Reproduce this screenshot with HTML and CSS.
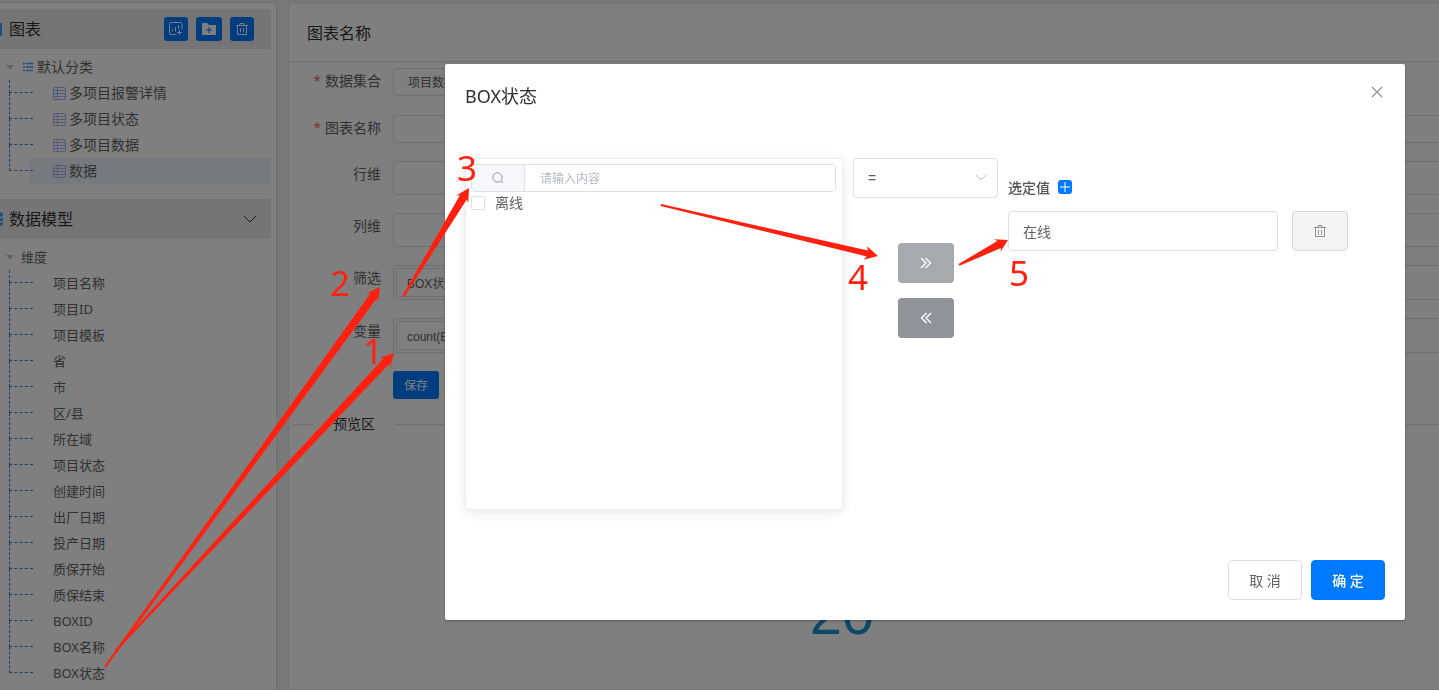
FILE: index.html
```html
<!DOCTYPE html>
<html lang="zh-CN">
<head>
<meta charset="utf-8">
<title>图表</title>
<link rel="stylesheet" href="styles.css">
</head>
<body>
<svg class="defs" aria-hidden="true">
  <symbol id="sheet" viewBox="0 0 13 13"><rect x=".5" y=".5" width="12" height="12" rx="1.5"/><path d="M.5 3.5h12M.5 6.5h12M.5 9.5h12M4.5 .5v12"/></symbol>
  <symbol id="trash" viewBox="0 0 14 14"><path d="M1 3.5h12M5 3V1.5h4V3M2.500 4v8.500h9V4M5.500 6v4.500M8.500 6v4.500"/></symbol>
</svg>
<div class="app">
  <aside class="side">
    <header class="side-head">
      <svg class="head-icon" viewBox="0 0 16 16"><path d="M1 2h14v13H1z"/></svg>
      <h2>图表</h2>
      <div class="tools">
        <button class="tool" aria-label="新增图表"><svg viewBox="0 0 14 14"><path d="M7.500 12.500H2A1.500 1.500 0 0 1 .5 11V2A1.500 1.500 0 0 1 2 .5h9.500A1.500 1.500 0 0 1 13 2v5.500M3.500 9.500v-2M6.500 9.500V5M9.500 7V3M10.500 8v5M8 10.500h5"/></svg></button>
        <button class="tool" aria-label="新增分类"><svg viewBox="0 0 14 14"><path class="solid" d="M0 1h5.500l1.500 2h7v10H0z"/><path class="blue" d="M7 5v6M4 8h6"/></svg></button>
        <button class="tool" aria-label="删除"><svg><use href="#trash"/></svg></button>
      </div>
    </header>
    <div class="tree">
      <div class="root"><span class="caret"></span><svg class="list" viewBox="0 0 10 10"><path d="M0 1.500h2M3 1.500h7M0 5h2M3 5h7M0 8.500h2M3 8.500h7"/></svg>默认分类</div>
      <ul class="nodes charts">
        <li><svg><use href="#sheet"/></svg>多项目报警详情</li>
        <li><svg><use href="#sheet"/></svg>多项目状态</li>
        <li><svg><use href="#sheet"/></svg>多项目数据</li>
        <li class="current"><svg><use href="#sheet"/></svg>数据</li>
      </ul>
    </div>
    <header class="side-head model">
      <svg class="head-icon" viewBox="0 0 16 16"><path d="M0 2q8-3 16 0v3q-8 3-16 0zM0 6.500q8 3 16 0v3q-8 3-16 0zM0 11q8 3 16 0v3q-8 3-16 0z"/></svg>
      <h2>数据模型</h2>
      <svg class="fold" viewBox="0 0 14 8"><path d="M1 1l6 6 6-6"/></svg>
    </header>
    <div class="tree small">
      <div class="root"><span class="caret"></span>维度</div>
      <ul class="nodes">
        <li>项目名称</li><li>项目ID</li><li>项目模板</li><li>省</li><li>市</li><li>区/县</li><li>所在域</li><li>项目状态</li><li>创建时间</li><li>出厂日期</li><li>投产日期</li><li>质保开始</li><li>质保结束</li><li>BOXID</li><li>BOX名称</li><li>BOX状态</li>
      </ul>
    </div>
  </aside>
  <main class="main">
    <h2 class="main-head">图表名称</h2>
    <form class="form">
      <div class="row first"><label class="need" for="ds">数据集合</label><select id="ds" class="ds"><option>项目数据</option></select></div>
      <div class="row"><label class="need" for="nm">图表名称</label><input id="nm" class="field" type="text"></div>
      <div class="row"><span class="label">行维</span><div class="drop"></div></div>
      <div class="row"><span class="label">列维</span><div class="drop"></div></div>
      <div class="row"><span class="label">筛选</span><div class="drop filled"><button type="button" class="tag">BOX状态</button></div></div>
      <div class="row"><span class="label">变量</span><div class="drop filled"><button type="button" class="tag">count(BOX状态)</button></div></div>
      <div class="row"><span class="label"></span><button type="button" class="save">保存</button></div>
    </form>
    <div class="divider">预览区</div>
    <div class="figure">20</div>
  </main>
</div>
<div class="mask">
  <section class="dialog" role="dialog" aria-labelledby="dt">
    <header class="dialog-head">
      <h1 id="dt">BOX状态</h1>
      <button class="close" aria-label="关闭"><svg viewBox="0 0 12 12"><path d="M1 1l10 10M11 1L1 11"/></svg></button>
    </header>
    <div class="picker">
      <div class="source">
        <div class="search">
          <span class="search-icon"><svg viewBox="0 0 12 12"><circle cx="5.500" cy="5.500" r="4.700"/><path d="M9 9l2 2"/></svg></span>
          <input type="text" placeholder="请输入内容" aria-label="搜索">
        </div>
        <label class="check"><input type="checkbox">离线</label>
      </div>
      <div class="middle">
        <div class="op"><select aria-label="运算符"><option>=</option></select><svg viewBox="0 0 12 8"><path d="M1 1l5 5 5-5"/></svg></div>
        <button class="move soft" aria-label="添加"><svg viewBox="0 0 12 12"><path d="M1 1l5 5-5 5M5.500 1l5 5-5 5"/></svg></button>
        <button class="move" aria-label="移除"><svg viewBox="0 0 12 12"><path d="M11 1L6 6l5 5M6.500 1l-5 5 5 5"/></svg></button>
      </div>
      <div class="chosen">
        <div class="chosen-head"><label for="val">选定值</label><button class="plus" aria-label="新增"><svg viewBox="0 0 14 14"><path d="M7 2v10M2 7h10"/></svg></button></div>
        <div class="chosen-row"><input id="val" type="text" value="在线"><button class="del" aria-label="删除"><svg><use href="#trash"/></svg></button></div>
      </div>
    </div>
    <footer class="dialog-foot">
      <button class="btn">取 消</button>
      <button class="btn primary">确 定</button>
    </footer>
  </section>
</div>
<svg class="notes">
  <g transform="translate(394 353) rotate(-46.900)"><path d="M0 0L-13-7-11-4-407-1V1L-11 4-13 7z"/></g>
  <g transform="translate(380 287) rotate(-54.100)"><path d="M0 0L-13-7-11-4-469-1V1L-11 4-13 7z"/></g>
  <g transform="translate(469 188) rotate(-58.800)"><path d="M0 0L-13-7-11-4-127-1V1L-11 4-13 7z"/></g>
  <g transform="translate(878 256) rotate(13.200)"><path d="M0 0L-13-7-11-3-223-1V1L-11 3-13 7z"/></g>
  <g transform="translate(1008 240) rotate(-27)"><path d="M0 0L-12-7-10-4-55-1V1L-10 4-12 7z"/></g>
  <text x="363" y="364">1</text>
  <text x="330" y="296">2</text>
  <text x="457" y="181">3</text>
  <text x="848" y="290">4</text>
  <text x="1009" y="286">5</text>
</svg>
</body>
</html>
```
FILE: styles.css
```css
* { box-sizing: border-box; }
html, body { margin: 0; height: 100%; overflow: hidden; }
body, button, input, select {
  font-family: "Noto Sans", "Noto Sans CJK SC", sans-serif;
  font-size: 14px;
  color: #606266;
}
body { background: #f0f0f0; }
h1, h2 { margin: 0; font-weight: 400; }
ul { margin: 0; padding: 0; list-style: none; }
button { padding: 0; border: 0; cursor: pointer; display: flex; align-items: center; justify-content: center; }
svg { fill: none; stroke: currentColor; flex: none; }
.defs { display: none; }

.app { display: flex; gap: 12px; height: 100%; padding-top: 3px; }
.side {
  width: 276px; flex: none; overflow: hidden;
  padding: 6px 5px 0 0;
  background: #fff;
  border-radius: 0 4px 0 0;
  box-shadow: 0 0 2px #c8ccd8;
}
.side-head { display: flex; align-items: center; height: 40px; padding-right: 17px; background: #ebebeb; color: #303133; }
.side-head h2 { margin-left: 6px; font-size: 16px; line-height: 40px; }
.head-icon { width: 16px; height: 16px; margin-left: -13px; fill: #409eff; stroke: none; }
.tools { display: flex; gap: 8px; margin-left: auto; }
.tool { width: 24px; height: 24px; border-radius: 3px; background: #007bff; color: #fff; }
.tool:nth-child(2) { width: 26px; }
.tool svg { width: 14px; height: 14px; }
.tool .solid { fill: #fff; stroke: none; }
.tool .blue { stroke: #007bff; }
.model { margin-top: 15px; padding-right: 14px; }
.fold { width: 14px; height: 8px; margin-left: auto; }

.tree { padding-top: 5px; line-height: 26px; }
.small { font-size: 13px; }
.root { display: flex; align-items: center; height: 26px; padding-left: 6px; }
.caret { border: 4px solid transparent; border-top: 5px solid #c0c4cc; border-bottom: 0; margin-right: 7px; }
.list { width: 10px; height: 10px; margin: 0 4px 0 2px; stroke: #409eff; stroke-width: 1.500; }
.nodes li {
  position: relative; display: flex; align-items: center; gap: 3px;
  height: 26px; margin-left: 29px; padding-left: 24px; white-space: nowrap;
}
.nodes svg { width: 13px; height: 13px; color: #a9b4f0; }
.nodes li::before {
  content: ""; position: absolute; left: -20px; top: 12px; width: 24px;
  border-top: 1px dashed #2f7fd8;
}
.nodes li::after {
  content: ""; position: absolute; left: -20px; top: -13px; height: 26px;
  border-left: 1px dashed #2f7fd8;
}
.nodes li:first-child::after { top: 0; height: 13px; }
.current { background: #edf5ff; }

.main { flex: 1; min-width: 0; background: #fff; border: 1px solid #e4e7ed; border-right: 0; border-radius: 4px 0 0 0; }
.main-head { height: 58px; padding-left: 18px; border-bottom: 1px solid #dcdfe6; font-size: 16px; line-height: 58px; color: #303133; }
.form { display: grid; gap: 18px; padding-top: 6px; }
.row { display: flex; align-items: flex-start; }
.first { min-height: 29px; }
.row label, .label { flex: none; width: 104px; padding-right: 12px; line-height: 26px; text-align: right; }
.need::before { content: "*"; margin-right: 4px; color: #f56c6c; }
.ds { width: 300px; height: 28px; padding: 0 14px; appearance: none; background: #fff; border: 1px solid #dcdfe6; border-radius: 4px; font-size: 12px; }
.field, .drop { flex: 1; min-width: 0; border: 1px solid #dcdfe6; border-radius: 4px 0 0 4px; border-right: 0; background: #fff; }
.field { height: 28px; }
.drop { min-height: 34px; }
.filled { padding: 2px; }
.tag { height: 29px; padding: 0 10px; background: #fff; border: 1px solid #dcdfe6; border-radius: 3px; font-family: "Liberation Sans", "Noto Sans CJK SC", sans-serif; font-size: 12px; }
.save { width: 46px; height: 28px; border-radius: 3px; background: #007bff; color: #fff; font-size: 12px; }
.divider { display: flex; align-items: center; gap: 20px; margin: 15px 0 0 4px; line-height: 20px; color: #303133; }
.divider::before, .divider::after { content: ""; height: 1px; background: #dcdfe6; }
.divider::before { width: 20px; }
.divider::after { flex: 1; }
.figure { padding: 148px 44px 0 0; text-align: center; font: 58px/64px "Liberation Sans", sans-serif; color: #1890d0; }

.mask { position: fixed; inset: 0; padding: 64px 34px 0 445px; background: rgba(0, 0, 0, .5); }
.dialog { background: #fff; border-radius: 2px; box-shadow: 0 1px 3px rgba(0, 0, 0, .3); padding: 20px; }
.dialog-head { display: flex; justify-content: space-between; align-items: flex-start; height: 74px; }
.dialog-head h1 { font-size: 18px; line-height: 24px; color: #303133; }
.close { width: 16px; height: 16px; background: none; color: #909399; }
.close svg { width: 12px; height: 12px; stroke-width: 1.300; }
.picker { display: flex; gap: 10px; align-items: flex-start; }
.source { width: 378px; height: 352px; padding: 5px 6px 5px 5px; border: 1px solid #ebeef5; border-radius: 4px; box-shadow: 0 2px 12px rgba(0, 0, 0, .1); }
.search { display: flex; height: 28px; border: 1px solid #dcdfe6; border-radius: 4px; overflow: hidden; }
.search-icon { display: flex; align-items: center; justify-content: center; width: 53px; background: #f5f7fa; border-right: 1px solid #dcdfe6; color: #909399; }
.search-icon svg { width: 12px; height: 12px; }
.search input { flex: 1; min-width: 0; border: 0; padding: 0 15px; font-size: 12px; }
.search input::placeholder { color: #b4b8c2; }
.check { display: flex; align-items: center; gap: 10px; height: 21px; line-height: 20px; }
.check input { appearance: none; width: 14px; height: 14px; margin: 0; border: 1px solid #dcdfe6; border-radius: 2px; }
.middle { display: grid; justify-items: center; gap: 15px; width: 145px; }
.op { position: relative; width: 100%; margin-bottom: 30px; }
.op select { display: block; width: 100%; height: 40px; padding: 0 14px; appearance: none; background: #fff; border: 1px solid #dcdfe6; border-radius: 4px; font-family: "Liberation Sans", sans-serif; }
.op svg { position: absolute; right: 11px; top: 16px; width: 12px; height: 8px; color: #c0c4cc; }
.move { width: 56px; height: 40px; border-radius: 4px; background: #909399; color: #fff; }
.soft { background: #a6a9ad; }
.move svg { width: 12px; height: 12px; stroke-width: 1.400; }
.chosen { flex: 1; padding-top: 19px; }
.chosen-head { display: flex; align-items: center; gap: 8px; height: 20px; font-weight: 500; color: #505256; }
.plus { width: 14px; height: 14px; border-radius: 3px; background: #007bff; color: #fff; }
.plus svg { width: 14px; height: 14px; }
.chosen-row { display: flex; gap: 14px; margin-top: 14px; }
.chosen-row input { width: 270px; height: 40px; padding: 0 14px; border: 1px solid #dcdfe6; border-radius: 4px; }
.del { width: 56px; height: 40px; border: 1px solid #d3d4d6; border-radius: 4px; background: #f4f4f5; color: #909399; }
.del svg { width: 14px; height: 14px; }
.dialog-foot { display: flex; justify-content: flex-end; gap: 9px; margin-top: 50px; }
.btn { width: 74px; height: 40px; border: 1px solid #dcdfe6; border-radius: 4px; background: #fff; }
.primary { border-color: #007bff; background: #007bff; color: #fff; font-weight: 500; }

.notes { position: fixed; inset: 0; width: 100%; height: 100%; pointer-events: none; fill: #ff2010; stroke: none; font-size: 35px; }
```
